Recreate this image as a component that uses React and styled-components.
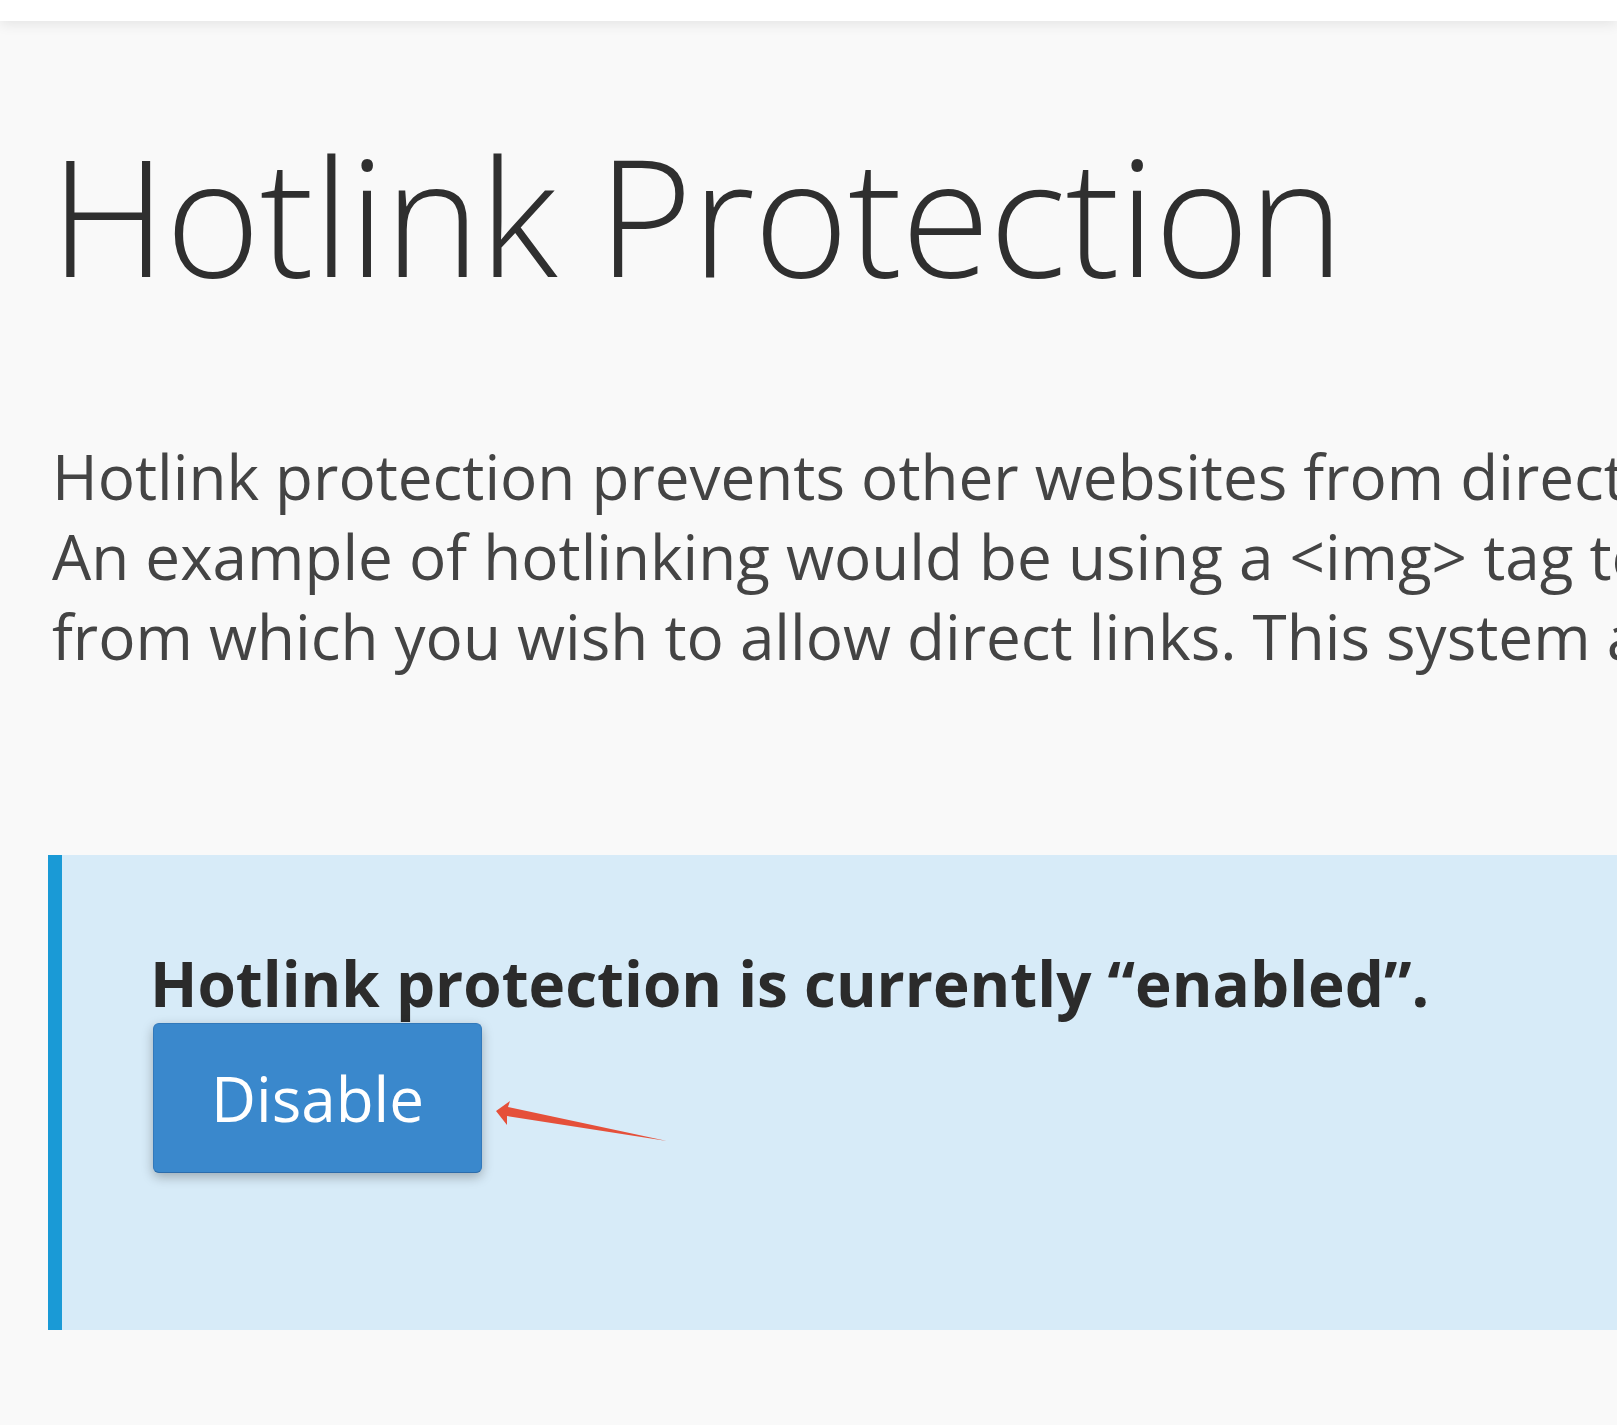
import React from "react";
import styled, { createGlobalStyle } from "styled-components";

const GlobalStyle = createGlobalStyle`
  html, body {
    margin: 0;
    padding: 0;
    background: #f9f9f9;
    overflow: hidden;
  }
  body {
    font-family: "Open Sans", "Liberation Sans", sans-serif;
    color: #333;
  }
`

const Page = styled.div`
  min-height: 1425px;
  background: #f9f9f9;
`

const TopBar = styled.header`
  height: 21px;
  background: #fff;
  box-shadow: 0 3px 14px rgba(0, 0, 0, 0.09);
  position: relative;
  z-index: 1;
`

const Main = styled.main`
  padding: 0 0 0 48px;
`

const Title = styled.h1`
  margin: 104px 0 0 2px;
  font-size: 162px;
  font-weight: 300;
  line-height: 178px;
  color: #2f2f2f;
  letter-spacing: -0.9px;
  white-space: nowrap;
`

const Description = styled.p`
  margin: 133px 0 0 4px;
  font-size: 62px;
  line-height: 80px;
  color: #444;
  white-space: nowrap;
`

const Alert = styled.section`
  margin-top: 179px;
  background: #d7ebf8;
  border-left: 14px solid #1a9ad6;
  padding: 88px 0 157px 88px;
`

const Status = styled.p`
  margin: 0;
  font-size: 62px;
  font-weight: 700;
  line-height: 80px;
  color: #2b2b2b;
  white-space: nowrap;
`

const ButtonRow = styled.div`
  position: relative;
  display: inline-block;
`

const Button = styled.button`
  display: block;
  margin: 0 0 0 3px;
  padding: 31px 57px;
  font-family: "Open Sans", "Liberation Sans", sans-serif;
  font-size: 62px;
  line-height: 86px;
  color: #fff;
  background: #3a88cc;
  border: 1px solid #3279bb;
  border-bottom-color: #2c6cab;
  border-radius: 6px;
  box-shadow: 0 4px 12px rgba(0, 0, 0, 0.28);
  cursor: pointer;
`

const Arrow = styled.svg`
  position: absolute;
  left: calc(100% + 10px);
  top: 75px;
  width: 180px;
  height: 50px;
  overflow: visible;
`

function App() {
  return (
    <Page>
      <GlobalStyle />
      <TopBar />
      <Main>
        <Title>Hotlink Protection</Title>
        <Description>
          Hotlink protection prevents other websites from directly linking to files (as specified below) on your website. Other sites will still be able to link to any file type that you don’t specify below (i.e., HTML files).
          <br />
          An example of hotlinking would be using a &lt;img&gt; tag to display an image from your site from somewhere else on the net. The end result is that the other site is stealing your bandwidth. List the URLs below
          <br />
          from which you wish to allow direct links. This system attempts to add all sites it knows you own to the list; however, you may need to add others.
        </Description>
        <Alert>
          <Status>Hotlink protection is currently “enabled”.</Status>
          <ButtonRow>
            <Button type="button">Disable</Button>
            <Arrow viewBox="0 0 180 50">
              <polygon
                points="4,13 18,3 16,9 175,43 15,18 15,27"
                fill="#e5503a"
              />
            </Arrow>
          </ButtonRow>
        </Alert>
      </Main>
    </Page>
  );
}

export default App;
